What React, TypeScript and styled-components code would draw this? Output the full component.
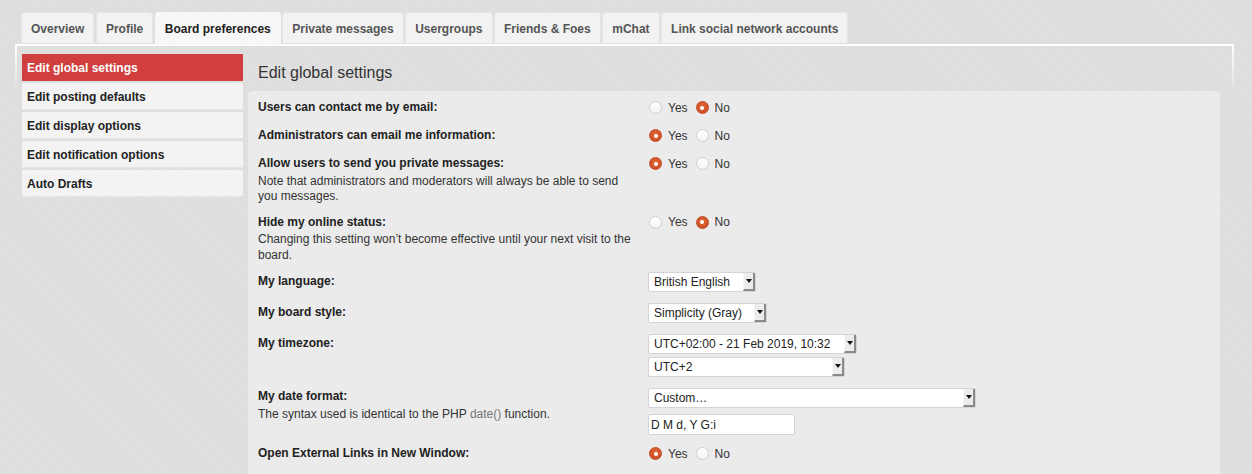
import React from "react"
import styled, { createGlobalStyle } from "styled-components"

const GlobalStyle = createGlobalStyle`
  body {
    margin: 0;
    background-color: #dddddd;
    background-image: repeating-linear-gradient(
      45deg,
      rgba(255, 255, 255, 0.12) 0 1px,
      transparent 1px 3px
    );
    font-family: "Liberation Sans", Arial, sans-serif;
    font-size: 12px;
    color: #222;
  }
`

const Page = styled.div`
  padding: 12px 18px 0 15px;
  height: 462px;
  overflow: hidden;
`

const TabBar = styled.ul`
  display: flex;
  align-items: flex-start;
  list-style: none;
  margin: 0;
  padding: 0 0 0 6px;
  height: 32px;
`

const Tab = styled.li<{ $active?: boolean }>`
  height: ${p => (p.$active ? "33px" : "31px")};
  padding: 0 9px;
  margin-right: 1.5px;
  display: flex;
  align-items: center;
  background: ${p => (p.$active ? "#f7f7f7" : "#f2f2f2")};
  border: 1px solid ${p => (p.$active ? "#f7f7f7" : "#e6e6e6")};
  border-bottom: none;
  border-radius: 4px 4px 0 0;
  font-weight: bold;
  color: ${p => (p.$active ? "#222" : "#555")};
  padding-top: ${p => (p.$active ? "0" : "2px")};
  box-sizing: border-box;
  position: relative;
  z-index: 1;
`

const Panel = styled.div`
  border: 2px solid transparent;
  border-bottom: none;
  border-image: linear-gradient(#fff, rgba(255, 255, 255, 0) 48px) 1;
  padding: 8px 12px 0 5px;
  display: flex;
  gap: 5px;
`

const Menu = styled.ul`
  list-style: none;
  margin: 0;
  padding: 0;
  width: 221px;
  flex-shrink: 0;
`

const MenuItem = styled.li<{ $active?: boolean }>`
  height: 27px;
  margin-bottom: 2px;
  padding: 1px 0 0 5px;
  display: flex;
  align-items: center;
  font-weight: bold;
  background: ${p => (p.$active ? "#d13e3e" : "#f3f3f3")};
  color: ${p => (p.$active ? "#fff" : "#222")};
  border-bottom: 1px solid ${p => (p.$active ? "#d13e3e" : "#e4e4e4")};
  box-sizing: border-box;
`

const Main = styled.div`
  flex: 1;
`

const Title = styled.h2`
  margin: 0;
  height: 37px;
  padding: 0 10px;
  display: flex;
  align-items: center;
  font-size: 16px;
  font-weight: normal;
  color: #333;
`

const Box = styled.div`
  background: #ebebeb;
  border-radius: 4px 4px 0 0;
  padding: 7px 10px 40px;
`

const Row = styled.dl`
  display: flex;
  margin: 0 0 8px;
`

const Term = styled.dt`
  width: 380px;
  flex-shrink: 0;
  margin-right: 10px;
`

const Label = styled.div<{ $field?: boolean }>`
  font-weight: bold;
  line-height: 18px;
  padding-top: ${p => (p.$field ? "1px" : "0")};
`

const Explain = styled.div`
  margin-top: 1.5px;
  line-height: 15.5px;
  color: #333;
`

const Link = styled.span`
  color: #777;
`

const Value = styled.dd`
  margin: 0;
  min-height: 20px;
  display: flex;
  flex-direction: column;
  align-items: flex-start;
`

const RadioGroup = styled.div`
  display: flex;
  align-items: center;
  height: 19px;
  padding-left: 1px;
`

const Radio = styled.span<{ $on?: boolean }>`
  width: 13px;
  height: 13px;
  box-sizing: border-box;
  border-radius: 50%;
  display: inline-flex;
  align-items: center;
  justify-content: center;
  background: ${p =>
    p.$on
      ? "radial-gradient(circle at 50% 40%, #e2673a, #c4491f)"
      : "linear-gradient(#fff, #f4f4f4)"};
  border: 1px solid ${p => (p.$on ? "#c4491f" : "#cfcfcf")};
  &::after {
    content: "";
    width: 4px;
    height: 4px;
    border-radius: 50%;
    background: #fff;
    display: ${p => (p.$on ? "block" : "none")};
  }
`

const RadioText = styled.span`
  margin: 0 8px 0 6px;
  color: #333;
`

const SelectBox = styled.div`
  height: 20px;
  box-sizing: border-box;
  display: flex;
  align-items: center;
  background: #fff;
  border: 1px solid #d4d4d4;
  border-radius: 2px;
  margin: 1px 0 2px;
`

const SelectText = styled.span`
  flex: 1;
  padding-left: 5px;
  color: #222;
  white-space: nowrap;
`

const Arrow = styled.span`
  width: 12px;
  height: 18px;
  box-sizing: border-box;
  background: #ececec;
  border-left: 1px solid #f6f6f6;
  border-right: 2px solid #8a8a8a;
  border-bottom: 2px solid #8a8a8a;
  display: flex;
  align-items: center;
  justify-content: center;
  &::after {
    content: "";
    border-left: 3px solid transparent;
    border-right: 3px solid transparent;
    border-top: 4px solid #111;
  }
`

const TextInput = styled.div`
  width: 147px;
  height: 21px;
  box-sizing: border-box;
  margin: 4px 0 1px;
  padding-left: 2px;
  display: flex;
  align-items: center;
  background: #fff;
  border: 1px solid #d4d4d4;
  border-radius: 2px;
  color: #222;
`

const Select = ({ text, width }: { text: string; width: number }) => (
  <SelectBox style={{ width }}>
    <SelectText>{text}</SelectText>
    <Arrow />
  </SelectBox>
)

const YesNo = ({ yes }: { yes: boolean }) => (
  <RadioGroup>
    <Radio $on={yes} />
    <RadioText>Yes</RadioText>
    <Radio $on={!yes} />
    <RadioText>No</RadioText>
  </RadioGroup>
)

const tabs = [
  "Overview",
  "Profile",
  "Board preferences",
  "Private messages",
  "Usergroups",
  "Friends & Foes",
  "mChat",
  "Link social network accounts",
]

const menu = [
  "Edit global settings",
  "Edit posting defaults",
  "Edit display options",
  "Edit notification options",
  "Auto Drafts",
]

export default function App() {
  return (
    <>
      <GlobalStyle />
      <Page>
        <TabBar>
          {tabs.map(t => (
            <Tab key={t} $active={t === "Board preferences"}>
              {t}
            </Tab>
          ))}
        </TabBar>
        <Panel>
          <Menu>
            {menu.map((m, i) => (
              <MenuItem key={m} $active={i === 0}>
                {m}
              </MenuItem>
            ))}
          </Menu>
          <Main>
            <Title>Edit global settings</Title>
            <Box>
              <Row>
                <Term>
                  <Label>Users can contact me by email:</Label>
                </Term>
                <Value>
                  <YesNo yes={false} />
                </Value>
              </Row>
              <Row>
                <Term>
                  <Label>Administrators can email me information:</Label>
                </Term>
                <Value>
                  <YesNo yes={true} />
                </Value>
              </Row>
              <Row>
                <Term>
                  <Label>Allow users to send you private messages:</Label>
                  <Explain>
                    Note that administrators and moderators will always be able to send you
                    messages.
                  </Explain>
                </Term>
                <Value>
                  <YesNo yes={true} />
                </Value>
              </Row>
              <Row>
                <Term>
                  <Label>Hide my online status:</Label>
                  <Explain>
                    Changing this setting won’t become effective until your next visit to the
                    board.
                  </Explain>
                </Term>
                <Value>
                  <YesNo yes={false} />
                </Value>
              </Row>
              <Row>
                <Term>
                  <Label $field>My language:</Label>
                </Term>
                <Value>
                  <Select text="British English" width={108} />
                </Value>
              </Row>
              <Row>
                <Term>
                  <Label $field>My board style:</Label>
                </Term>
                <Value>
                  <Select text="Simplicity (Gray)" width={119} />
                </Value>
              </Row>
              <Row>
                <Term>
                  <Label $field>My timezone:</Label>
                </Term>
                <Value>
                  <Select text="UTC+02:00 - 21 Feb 2019, 10:32" width={209} />
                  <Select text="UTC+2" width={197} />
                </Value>
              </Row>
              <Row>
                <Term>
                  <Label>My date format:</Label>
                  <Explain>
                    The syntax used is identical to the PHP <Link>date()</Link> function.
                  </Explain>
                </Term>
                <Value>
                  <Select text="Custom…" width={328} />
                  <TextInput>D M d, Y G:i</TextInput>
                </Value>
              </Row>
              <Row>
                <Term>
                  <Label>Open External Links in New Window:</Label>
                </Term>
                <Value>
                  <YesNo yes={true} />
                </Value>
              </Row>
            </Box>
          </Main>
        </Panel>
      </Page>
    </>
  )
}
